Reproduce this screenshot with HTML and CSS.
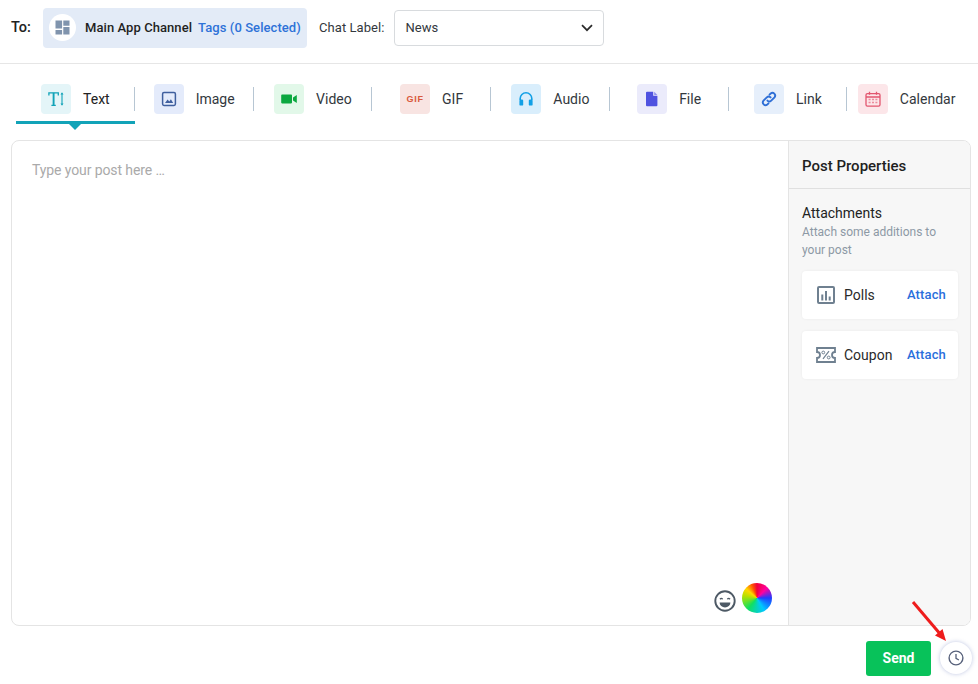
FILE: index.html
```html
<!DOCTYPE html>
<html lang="en">
<head>
<meta charset="utf-8">
<title>New post</title>
<link rel="stylesheet" href="styles.css">
</head>
<body>
<header class="topbar">
  <span class="to-label">To:</span>
  <div class="channel">
    <span class="channel-icon">
      <svg width="15" height="15" viewBox="0 0 15 15"><path fill="#8094ad" d="M.5.500h6.600v8H.5zM8.300.500h6.200v5.200H8.300zM.5 10h6.600v4.500H.5zM8.300 7h6.200v7.500H8.300z"/></svg>
    </span>
    <span class="channel-name">Main App Channel</span>
    <span class="channel-tags">Tags (0 Selected)</span>
  </div>
  <span class="chat-label">Chat Label:</span>
  <div class="select">
    <span>News</span>
    <svg width="12" height="8" viewBox="0 0 12 8"><path d="M1 1.200l5 5 5-5" fill="none" stroke="#2b2b2b" stroke-width="1.700"/></svg>
  </div>
</header>

<nav class="tabs">
  <div class="tab tab-active">
    <span class="tab-icon ic-text"><svg width="16" height="14" viewBox="0 0 16 14"><path d="M.9 3.400V.8h9.400v2.600M3.400 13.300h4.400" fill="none" stroke="#12a3b8" stroke-width="1.300"/><path d="M5.600.8v12.400" fill="none" stroke="#12a3b8" stroke-width="1.900"/><path d="M14 1.500v11" stroke="#12a3b8" stroke-width="1.100"/><path d="M12.500 2.400L14 .2l1.500 2.200zM12.500 11.600L14 13.800l1.500-2.200z" fill="#12a3b8"/></svg></span>
    <span>Text</span>
  </div>
  <div class="tab">
    <span class="tab-icon ic-image"><svg width="16" height="16" viewBox="0 0 16 16"><rect x="1.600" y="1.600" width="12.800" height="12.800" rx="1.400" fill="none" stroke="#3f5f9e" stroke-width="1.500"/><path d="M4 12l2.600-3.400 1.700 1.900 1.600-2.300L12.200 12z" fill="#3f5f9e"/></svg></span>
    <span>Image</span>
  </div>
  <div class="tab">
    <span class="tab-icon ic-video"><svg width="16" height="12" viewBox="0 0 16 12"><path fill="#0aa83f" d="M1 1.600h9.200a.8.8 0 0 1 .8.800v7.200a.8.8 0 0 1-.8.800H1a.8.8 0 0 1-.8-.8V2.400A.8.8 0 0 1 1 1.600zM12 4.600l3.800-2.600v8L12 7.400z"/></svg></span>
    <span>Video</span>
  </div>
  <div class="tab">
    <span class="tab-icon ic-gif"><span class="gif-mark">GIF</span></span>
    <span>GIF</span>
  </div>
  <div class="tab">
    <span class="tab-icon ic-audio"><svg width="16" height="16" viewBox="0 0 16 16"><path d="M2.200 9V7.600a5.800 5.800 0 0 1 11.600 0V9" fill="none" stroke="#12a0e6" stroke-width="1.600"/><rect x="1.400" y="8.600" width="3.800" height="6" rx="1.200" fill="#12a0e6"/><rect x="10.800" y="8.600" width="3.800" height="6" rx="1.200" fill="#12a0e6"/></svg></span>
    <span>Audio</span>
  </div>
  <div class="tab">
    <span class="tab-icon ic-file"><svg width="14" height="16" viewBox="0 0 14 16"><path fill="#4f52e0" d="M2 .800h6.200v4h4.200v9.400a1 1 0 0 1-1 1H2a1 1 0 0 1-1-1V1.800a1 1 0 0 1 1-1z"/><path fill="#8f91ec" d="M9.200.800l3.200 3.200H9.200z"/></svg></span>
    <span>File</span>
  </div>
  <div class="tab">
    <span class="tab-icon ic-link"><svg width="18" height="18" viewBox="0 0 18 18"><g fill="none" stroke="#2f6fd6" stroke-width="1.900" stroke-linecap="round"><path d="M7.400 10.600a2.700 2.700 0 0 0 3.800 0l3.300-3.300a2.700 2.700 0 0 0-3.800-3.800l-1.200 1.200"/><path d="M10.600 7.400a2.700 2.700 0 0 0-3.800 0l-3.300 3.300a2.700 2.700 0 0 0 3.800 3.800l1.200-1.200"/></g></svg></span>
    <span>Link</span>
  </div>
  <div class="tab tab-last">
    <span class="tab-icon ic-cal"><svg width="16" height="16" viewBox="0 0 16 16"><rect x="1" y="2.600" width="14" height="12.600" rx="1.400" fill="none" stroke="#e2566f" stroke-width="1.300"/><path d="M1 6h14M4.500.800v3M11.500.800v3" stroke="#e2566f" stroke-width="1.300" fill="none"/><path d="M3.600 7.800h2v1.500h-2zM7 7.800h2v1.500H7zM10.400 7.800h2v1.500h-2zM3.600 10.800h2v1.500h-2zM7 10.800h2v1.500H7zM10.400 10.800h2v1.500h-2z" fill="#ec8c9d"/></svg></span>
    <span>Calendar</span>
  </div>
</nav>

<main class="card">
  <section class="editor">
    <div class="placeholder">Type your post here …</div>
    <div class="editor-tools">
      <svg class="emoji" width="22" height="22" viewBox="0 0 22 22"><circle cx="11" cy="11" r="9.700" fill="none" stroke="#4d5965" stroke-width="1.900"/><path d="M6 9.200q1.300-1.700 2.600 0M13.400 9.200q1.300-1.700 2.600 0" fill="none" stroke="#4d5965" stroke-width="1.400"/><path d="M5.600 12.400h10.800a5.400 5 0 0 1-10.800 0z" fill="#4d5965"/></svg>
      <span class="wheel"></span>
    </div>
  </section>
  <aside class="props">
    <h2 class="props-title">Post Properties</h2>
    <div class="props-body">
      <h3 class="attach-title">Attachments</h3>
      <p class="attach-desc">Attach some additions to your post</p>
      <div class="attach-row">
        <svg width="18" height="18" viewBox="0 0 18 18"><rect x="1" y="1" width="16" height="16" rx="1" fill="none" stroke="#6f8090" stroke-width="2"/><path d="M4.300 8.500h2v6h-2zM8 5h2v9.500H8zM11.700 10.500h2v4h-2z" fill="#6f8090"/></svg>
        <span class="attach-name">Polls</span>
        <span class="attach-link">Attach</span>
      </div>
      <div class="attach-row">
        <svg class="coupon" width="20" height="16" viewBox="0 0 20 16"><path d="M1 1h18v4a3 3 0 0 0 0 6v4H1v-4a3 3 0 0 0 0-6z" fill="none" stroke="#6f8090" stroke-width="1.800"/><path d="M7 11.800L13 4.200" stroke="#6f8090" stroke-width="1.200"/><circle cx="7.300" cy="5.500" r="1.400" fill="none" stroke="#6f8090"/><circle cx="12.700" cy="10.500" r="1.400" fill="none" stroke="#6f8090"/></svg>
        <span class="attach-name">Coupon</span>
        <span class="attach-link">Attach</span>
      </div>
    </div>
  </aside>
</main>

<footer class="actions">
  <button class="send" type="button">Send</button>
  <span class="clock">
    <svg width="16" height="16" viewBox="0 0 16 16"><circle cx="8" cy="8" r="6.900" fill="none" stroke="#56607a" stroke-width="1.400"/><path d="M8 3.900V8.300l2.900 1.700" fill="none" stroke="#56607a" stroke-width="1.300"/></svg>
  </span>
</footer>

<svg class="arrow" width="40" height="44" viewBox="0 0 40 44"><path d="M2 1l28 33" stroke="#ee1c1c" stroke-width="3" fill="none"/><path d="M35 40l-11-5.500 7.500-6.500z" fill="#ee1c1c"/></svg>
</body>
</html>
```

FILE: styles.css
```css
* { box-sizing: border-box; }
html, body { margin: 0; padding: 0; }
body {
  position: relative;
  width: 978px;
  height: 684px;
  overflow: hidden;
  background: #fff;
  font-family: Roboto, "Liberation Sans", sans-serif;
  font-size: 14px;
  color: #2a2a2a;
}

.topbar {
  display: flex;
  align-items: center;
  height: 64px;
  padding: 0 0 8px 11px;
  border-bottom: 1px solid #e6e6e6;
}
.to-label { font-size: 14.500px; font-weight: 500; width: 32px; color: #222; }
.channel {
  display: flex;
  align-items: center;
  width: 264px;
  height: 40px;
  padding: 0 6px;
  border-radius: 4px;
  background: #e3ebf7;
}
.channel-icon {
  display: flex;
  align-items: center;
  justify-content: center;
  width: 27px;
  height: 27px;
  border-radius: 50%;
  background: #fff;
  margin-right: 9px;
}
.channel-name { font-size: 13px; font-weight: 500; letter-spacing: .07px; color: #1f1f1f; margin-right: 6px; white-space: nowrap; }
.channel-tags { font-size: 13px; font-weight: 500; letter-spacing: .07px; color: #2e72d8; white-space: nowrap; }
.chat-label { font-size: 13px; letter-spacing: .07px; color: #33383d; margin-left: 12px; margin-right: 9px; white-space: nowrap; }
.select {
  display: flex;
  align-items: center;
  justify-content: space-between;
  width: 210px;
  height: 36px;
  padding: 0 10px 0 11px;
  border: 1px solid #d8dbde;
  border-radius: 4px;
  font-size: 13px;
  color: #33383d;
}

.tabs {
  display: grid;
  grid-template-columns: repeat(8, 118.75px);
  margin: 20px 0 0 16px;
  height: 56px;
}
.tab {
  position: relative;
  display: flex;
  align-items: center;
  justify-content: center;
  gap: 12px;
  height: 30px;
  font-size: 14px;
  color: #33383d;
}
.tab::after {
  content: "";
  position: absolute;
  right: 0;
  top: 3px;
  width: 1px;
  height: 24px;
  background: #b7c6d3;
}
.tab-last::after { display: none; }
.tab-active::before {
  content: "";
  position: absolute;
  left: 0;
  right: 0;
  top: 37px;
  height: 3px;
  background: #12a3b8;
}
.tab-active { color: #222; }
.tab-active > span:last-child::after {
  content: "";
  position: absolute;
  left: 53px;
  top: 40px;
  border: 6px solid transparent;
  border-top-color: #12a3b8;
  border-bottom-width: 0;
}
.tab-icon {
  display: flex;
  align-items: center;
  justify-content: center;
  width: 30px;
  height: 30px;
  border-radius: 4px;
}
.ic-text { background: #e4f5f8; }
.ic-image { background: #e4ebfb; }
.ic-video { background: #e2f8e9; }
.ic-gif { background: #f8e4e2; }
.ic-audio { background: #d9eefc; }
.ic-file { background: #ebebfb; }
.ic-link { background: #e6effb; }
.ic-cal { background: #fce6e9; }
.gif-mark {
  font-family: "Liberation Sans", sans-serif;
  font-size: 9px;
  font-weight: 700;
  letter-spacing: .7px;
  color: #d9583c;
}

.card {
  display: flex;
  width: 960px;
  height: 486px;
  margin-left: 11px;
  border: 1px solid #e4e4e4;
  border-radius: 8px;
  overflow: hidden;
}
.editor {
  position: relative;
  flex: 1;
  padding: 21px 20px;
}
.placeholder { font-size: 14px; line-height: 16px; letter-spacing: -.1px; color: #aaa; }
.editor-tools {
  position: absolute;
  right: 16px;
  bottom: 12px;
  display: flex;
  align-items: center;
  gap: 6px;
}
.emoji { margin-top: 6px; }
.wheel {
  display: block;
  width: 30px;
  height: 30px;
  border-radius: 50%;
  background: conic-gradient(#f0003c 0deg, #ff00a0 45deg, #1f3cff 90deg, #00c8ff 150deg, #10e060 220deg, #b8e000 280deg, #ffd800 310deg, #ff5000 340deg, #f0003c 360deg);
}
.props {
  width: 182px;
  background: #f7f7f7;
  border-left: 1px solid #e4e4e4;
}
.props-title {
  margin: 0;
  height: 48px;
  padding: 0 13px;
  line-height: 50px;
  font-size: 15px;
  font-weight: 500;
  color: #1f1f1f;
  border-bottom: 1px solid #e0e0e0;
}
.props-body { padding: 16px 13px; }
.attach-title { margin: 0; font-size: 14px; line-height: 17px; font-weight: 400; color: #222; }
.attach-desc { margin: 1px 0 12px; font-size: 12px; line-height: 18px; color: #8d99a5; }
.attach-row {
  display: flex;
  align-items: center;
  width: 156px;
  height: 48px;
  margin-bottom: 12px;
  padding: 0 12px 0 15px;
  background: #fff;
  border-radius: 4px;
  box-shadow: 0 0 3px rgba(0, 0, 0, .06);
}
.attach-row .coupon { margin-left: -1px; }
.attach-name { margin-left: 9px; font-size: 14px; color: #2a2a2a; }
.attach-row .coupon + .attach-name { margin-left: 8px; }
.attach-link { margin-left: auto; margin-bottom: 2px; font-size: 13px; font-weight: 500; letter-spacing: .15px; color: #2a6fdc; }

.actions {
  display: flex;
  align-items: center;
  justify-content: flex-end;
  gap: 9px;
  height: 36px;
  margin-top: 14px;
  padding-right: 6px;
}
.send {
  width: 65px;
  height: 35px;
  border: 0;
  border-radius: 3px;
  background: #08c25a;
  color: #fff;
  font-family: inherit;
  font-size: 14px;
  font-weight: 700;
}
.clock {
  display: flex;
  align-items: center;
  justify-content: center;
  width: 32px;
  height: 32px;
  border-radius: 50%;
  background: #fff;
  box-shadow: 0 0 4px rgba(70, 90, 170, .35);
}
.arrow {
  position: absolute;
  left: 911px;
  top: 601px;
}
```
